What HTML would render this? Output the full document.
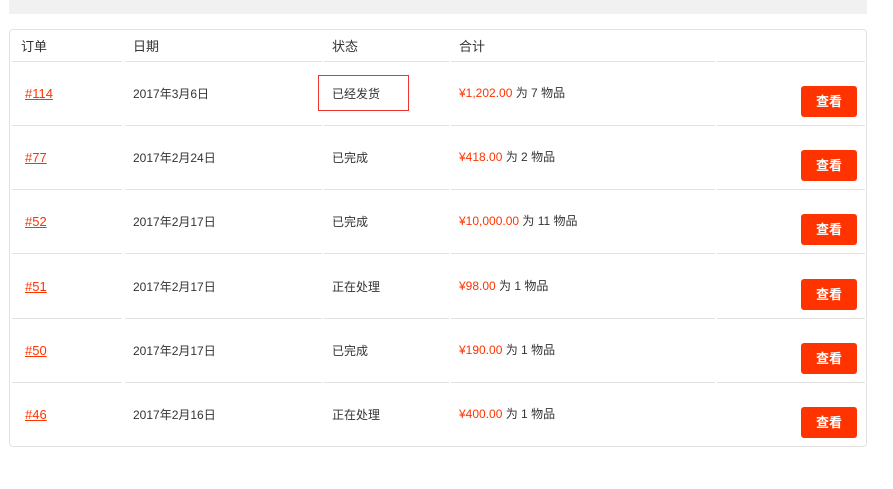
<!DOCTYPE html>
<html><head><meta charset="utf-8"><style>
body{margin:0;width:893px;height:489px;background:#fff;font-family:"Liberation Sans","Noto Sans CJK SC",sans-serif;color:#333;position:relative;overflow:hidden}
.bar{position:absolute;left:9px;top:0;width:858px;height:14px;background:#f1f1f1}
.box{position:absolute;left:9px;top:29px;width:856px;height:416px;border:1px solid #e3e3e3;border-radius:4px}
.ln{position:absolute;height:1px;background:#e3e3e3}
.t{position:absolute;font-size:12px;white-space:nowrap;line-height:14px}
.h{font-size:13px}
a{color:#ff3300;text-decoration:underline;font-size:13px}
.r{color:#ff3300}
.btn{position:absolute;left:801px;width:56px;height:31px;background:#ff3300;border-radius:3px;color:#fff;font-weight:bold;font-size:13px;text-align:center;line-height:31px}
.st{position:absolute;left:318px;top:75px;width:89px;height:34px;border:1px solid #e33}
</style></head><body>
<div class="bar"></div>
<div class="box"></div>
<div class="t h" style="left:21px;top:40px">订单</div>
<div class="t h" style="left:133px;top:40px">日期</div>
<div class="t h" style="left:332px;top:40px">状态</div>
<div class="t h" style="left:459px;top:40px">合计</div>
<div class="st"></div>
<div id="rows"></div>
<script>
var d=[["#114","2017年3月6日","已经发货","¥1,202.00","为 7 物品"],["#77","2017年2月24日","已完成","¥418.00","为 2 物品"],["#52","2017年2月17日","已完成","¥10,000.00","为 11 物品"],["#51","2017年2月17日","正在处理","¥98.00","为 1 物品"],["#50","2017年2月17日","已完成","¥190.00","为 1 物品"],["#46","2017年2月16日","正在处理","¥400.00","为 1 物品"]];
var lines=[61,125,189,253,318,382];
var cols=[[12,110],[125,197],[324,125],[451,264],[717,148]];
var h="";
lines.forEach(function(y){cols.forEach(function(c){h+='<div class="ln" style="left:'+c[0]+'px;top:'+y+'px;width:'+c[1]+'px"></div>'})});
d.forEach(function(r,i){var y=86+i*64.2;
h+='<div class="t" style="left:25px;top:'+(y+1)+'px"><a>'+r[0]+'</a></div>';
h+='<div class="t" style="left:133px;top:'+(y+1)+'px">'+r[1]+'</div>';
h+='<div class="t" style="left:332px;top:'+(y+1)+'px">'+r[2]+'</div>';
h+='<div class="t" style="left:459px;top:'+(y+0)+'px"><span class="r">'+r[3]+'</span> '+r[4]+'</div>';
h+='<div class="btn" style="top:'+y+'px">查看</div>';});
document.getElementById("rows").innerHTML=h;
</script>
</body></html>
